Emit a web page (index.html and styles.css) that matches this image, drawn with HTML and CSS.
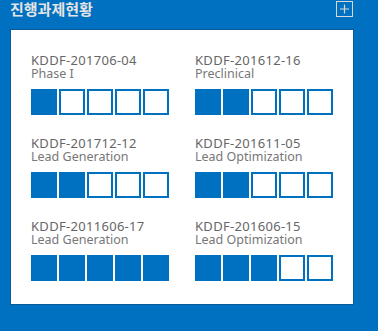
FILE: index.html
```html
<!DOCTYPE html>
<html lang="ko">
<head>
<meta charset="utf-8">
<title>진행과제현황</title>
<link rel="stylesheet" href="styles.css">
</head>
<body>
<div class="panel">
  <div class="header">
    <h2 class="title">진행과제현황</h2>
    <a class="more" href="#" aria-label="더보기">
      <svg width="17" height="16" viewBox="0 0 17 16"><rect x="0.5" y="0.5" width="16" height="15" fill="none" stroke="#d8d8d8"/><path d="M8.5 3.5v9M4 8h9" stroke="#d8d8d8" stroke-width="1.2"/></svg>
    </a>
  </div>
  <div class="card">
    <div class="item">
      <div class="code">KDDF-201706-04</div>
      <div class="phase">Phase I</div>
      <div class="steps"><span class="on"></span><span></span><span></span><span></span><span></span></div>
    </div>
    <div class="item">
      <div class="code">KDDF-201612-16</div>
      <div class="phase">Preclinical</div>
      <div class="steps"><span class="on"></span><span class="on"></span><span></span><span></span><span></span></div>
    </div>
    <div class="item">
      <div class="code">KDDF-201712-12</div>
      <div class="phase">Lead Generation</div>
      <div class="steps"><span class="on"></span><span class="on"></span><span></span><span></span><span></span></div>
    </div>
    <div class="item">
      <div class="code">KDDF-201611-05</div>
      <div class="phase">Lead Optimization</div>
      <div class="steps"><span class="on"></span><span class="on"></span><span></span><span></span><span></span></div>
    </div>
    <div class="item">
      <div class="code">KDDF-2011606-17</div>
      <div class="phase">Lead Generation</div>
      <div class="steps"><span class="on"></span><span class="on"></span><span class="on"></span><span class="on"></span><span class="on"></span></div>
    </div>
    <div class="item">
      <div class="code">KDDF-201606-15</div>
      <div class="phase">Lead Optimization</div>
      <div class="steps"><span class="on"></span><span class="on"></span><span class="on"></span><span></span><span></span></div>
    </div>
  </div>
</div>
</body>
</html>
```

FILE: styles.css
```css
html, body {
  margin: 0;
  padding: 0;
}
body {
  background: #0070c0;
  width: 378px;
  height: 331px;
  overflow: hidden;
  font-family: "Noto Sans", "Noto Sans CJK KR", sans-serif;
}
.panel {
  padding: 0 0 0 10px;
}
.header {
  display: flex;
  justify-content: space-between;
  align-items: flex-start;
  width: 344px;
  height: 29px;
}
.title {
  margin: 0;
  font-family: "Noto Sans CJK KR", sans-serif;
  font-size: 15px;
  font-weight: 700;
  line-height: 18px;
  color: #e4e4e4;
}
.more {
  display: block;
  width: 17px;
  height: 16px;
  margin: 1px 1px 0 0;
}
.more svg {
  display: block;
}
.card {
  width: 342px;
  height: 274px;
  box-sizing: content-box;
  background: #fff;
  border: 1px solid #0a5a9a;
  padding: 0;
  display: grid;
  grid-template-columns: 164px 164px;
  align-content: start;
  row-gap: 21px;
  padding: 23px 0 0 20px;
  box-sizing: border-box;
  width: 344px;
  height: 276px;
}
.code {
  font-size: 13px;
  line-height: 14px;
  color: #666;
  letter-spacing: 0.3px;
  white-space: nowrap;
}
.phase {
  font-size: 12.5px;
  line-height: 14px;
  color: #777;
  white-space: nowrap;
}
.steps {
  display: flex;
  gap: 2px;
  margin-top: 8px;
}
.steps span {
  width: 26px;
  height: 26px;
  box-sizing: border-box;
  border: 2px solid #0070c0;
  background: #fff;
}
.steps span.on {
  background: #0070c0;
}
```
